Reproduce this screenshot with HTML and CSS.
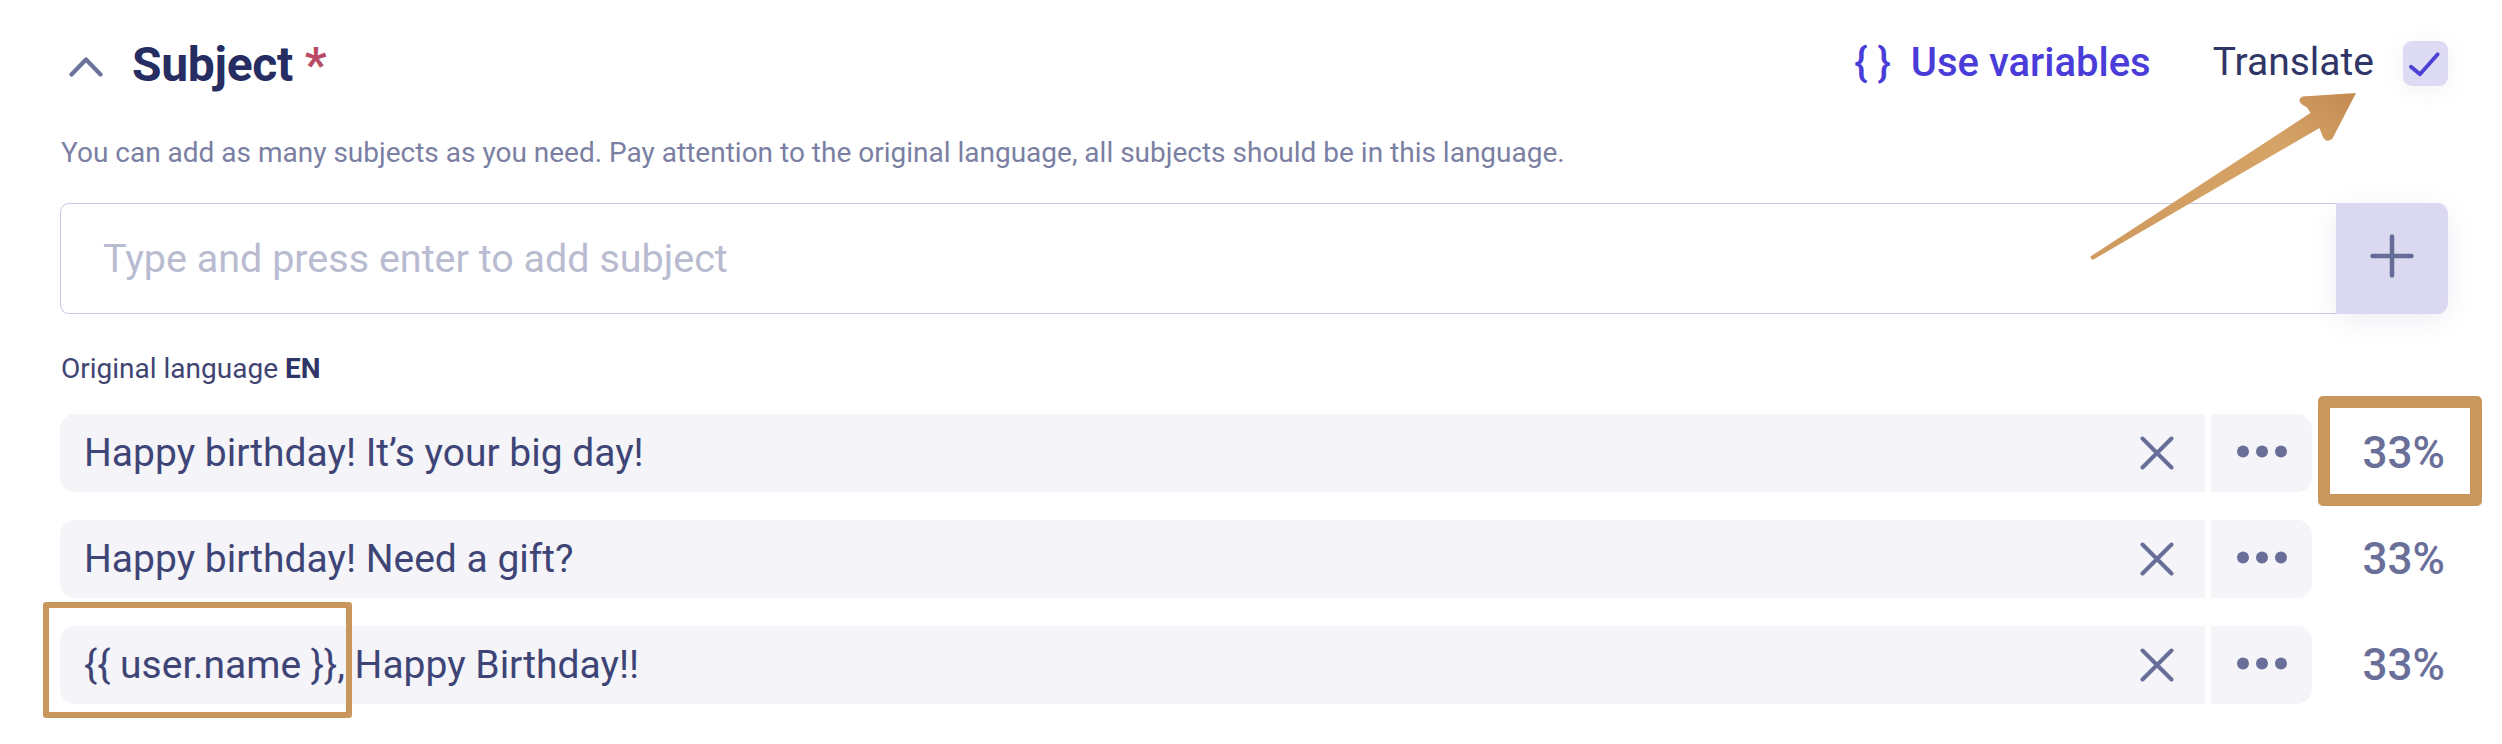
FILE: index.html
```html
<!DOCTYPE html>
<html lang="en">
<head>
<meta charset="utf-8">
<title>Subject</title>
<link rel="stylesheet" href="styles.css">
</head>
<body>
<div class="page">
  <header class="head">
    <div class="title-wrap">
      <svg class="chevron" width="34" height="21" viewBox="0 0 34 21"><polyline points="2.5,18.5 17,3.5 31.5,18.5" fill="none" stroke="#6c7299" stroke-width="4.2" stroke-linecap="round" stroke-linejoin="round"/></svg>
      <h2 class="title">Subject <span class="req">*</span></h2>
    </div>
    <div class="actions">
      <span class="vars"><span class="braces">{ }</span>Use variables</span>
      <span class="translate">Translate</span>
      <span class="check"><svg width="44" height="44" viewBox="0 0 44 44"><polyline points="7,25.7 16,33.3 33.7,13.3" fill="none" stroke="#4b3fd6" stroke-width="3.8" stroke-linecap="round" stroke-linejoin="round"/></svg></span>
    </div>
  </header>
  <p class="hint">You can add as many subjects as you need. Pay attention to the original language, all subjects should be in this language.</p>
  <div class="adder">
    <div class="input">Type and press enter to add subject</div>
    <div class="plus"><svg width="46" height="46" viewBox="0 0 46 46"><path d="M23 3.5 V42.5 M3.5 23 H42.5" fill="none" stroke="#676c96" stroke-width="4.5" stroke-linecap="round"/></svg></div>
  </div>
  <div class="lang">Original language <b>EN</b></div>
  <ul class="list">
    <li class="row">
      <div class="field"><span class="text">Happy birthday! It’s your big day!</span><svg class="x" width="34" height="34" viewBox="0 0 34 34"><path d="M2.5 2.5 L31.5 31.5 M31.5 2.5 L2.5 31.5" stroke="#696e98" stroke-width="4" stroke-linecap="round"/></svg></div>
      <div class="more"><svg width="50" height="13" viewBox="0 0 50 13"><circle cx="6" cy="6.5" r="6" fill="#696e98"/><circle cx="25" cy="6.5" r="6" fill="#696e98"/><circle cx="44" cy="6.5" r="6" fill="#696e98"/></svg></div>
      <div class="pct">33%<span class="mark mark-pct"></span></div>
    </li>
    <li class="row">
      <div class="field"><span class="text">Happy birthday! Need a gift?</span><svg class="x" width="34" height="34" viewBox="0 0 34 34"><path d="M2.5 2.5 L31.5 31.5 M31.5 2.5 L2.5 31.5" stroke="#696e98" stroke-width="4" stroke-linecap="round"/></svg></div>
      <div class="more"><svg width="50" height="13" viewBox="0 0 50 13"><circle cx="6" cy="6.5" r="6" fill="#696e98"/><circle cx="25" cy="6.5" r="6" fill="#696e98"/><circle cx="44" cy="6.5" r="6" fill="#696e98"/></svg></div>
      <div class="pct">33%</div>
    </li>
    <li class="row">
      <div class="field"><span class="text">{{ user.name }}, Happy Birthday!!</span><svg class="x" width="34" height="34" viewBox="0 0 34 34"><path d="M2.5 2.5 L31.5 31.5 M31.5 2.5 L2.5 31.5" stroke="#696e98" stroke-width="4" stroke-linecap="round"/></svg><span class="mark mark-var"></span></div>
      <div class="more"><svg width="50" height="13" viewBox="0 0 50 13"><circle cx="6" cy="6.5" r="6" fill="#696e98"/><circle cx="25" cy="6.5" r="6" fill="#696e98"/><circle cx="44" cy="6.5" r="6" fill="#696e98"/></svg></div>
      <div class="pct">33%</div>
    </li>
  </ul>
  <svg class="arrow" width="290" height="185" viewBox="0 0 290 185">
    <defs>
      <linearGradient id="ag" x1="0" y1="1" x2="1" y2="0">
        <stop offset="0" stop-color="#d09a5e"/>
        <stop offset="0.7" stop-color="#d6a367"/>
        <stop offset="1" stop-color="#c38b52"/>
      </linearGradient>
    </defs>
    <path d="M10.5 171.5 Q10.5 175 13.5 174.5 L239.5 43 L242.5 51 Q246 59 252.5 53.5 L276 8 L222.5 11.5 Q214.5 16 227 22.5 L230.5 28 Z" fill="url(#ag)"/>
  </svg>
</div>
</body>
</html>
```
FILE: styles.css
```css
* { box-sizing: border-box; }
html, body { margin: 0; padding: 0; background: #ffffff; overflow: hidden; }
body { font-family: Roboto, "Noto Sans", "Liberation Sans", sans-serif; color: #3e4576; }

.page {
  position: relative;
  width: 2502px;
  height: 744px;
  padding: 0 54px 0 60px;
}

.head {
  height: 130px;
  display: flex;
  align-items: center;
  justify-content: space-between;
}
.title-wrap { display: flex; align-items: center; gap: 29px; padding-left: 9px; }
.chevron { display: block; margin-top: 4px; }
.title {
  margin: 0;
  font-size: 48px;
  font-weight: 700;
  color: #262d63;
  line-height: 1.1;
  letter-spacing: -0.3px;
}
.req { color: #b84a63; }

.actions { display: flex; align-items: center; }
.vars {
  display: flex;
  align-items: center;
  gap: 20px;
  font-size: 40px;
  font-weight: 500;
  color: #4a3cd9;
  line-height: 1.1;
  margin-top: -5px;
}
.braces { font-weight: 500; }
.translate {
  margin-left: 62px;
  font-size: 39px;
  font-weight: 400;
  color: #2f3566;
  line-height: 1.1;
  margin-top: -5px;
}
.check {
  margin-left: 29px;
  width: 45px;
  height: 45px;
  border-radius: 9px;
  background: #dddaf3;
  box-shadow: 0 4px 22px rgba(90, 90, 150, 0.08);
  display: flex;
  align-items: center;
  justify-content: center;
  margin-top: -4px;
}
.check svg { display: block; }

.hint {
  margin: 3px 0 0 1px;
  font-size: 28px;
  line-height: 40px;
  color: #7a7fa3;
}

.adder {
  margin-top: 30px;
  display: flex;
  height: 111px;
}
.input {
  flex: 1;
  border: 1.5px solid #c8cadf;
  border-right: none;
  border-radius: 9px 0 0 9px;
  padding-left: 42px;
  display: flex;
  align-items: center;
  font-size: 39.5px;
  color: #b9bbd0;
}
.plus {
  width: 112px;
  background: #dbd8f1;
  border-radius: 0 11px 11px 0;
  box-shadow: 0 6px 26px rgba(90, 90, 150, 0.10);
  display: flex;
  align-items: center;
  justify-content: center;
}
.plus svg { display: block; margin-top: -5px; }

.lang {
  margin: 36px 0 0 1px;
  font-size: 28px;
  line-height: 38px;
  color: #3f4473;
}
.lang b { font-weight: 700; color: #2f3566; }

.list {
  list-style: none;
  margin: 26px 0 0 0;
  padding: 0;
  display: flex;
  flex-direction: column;
  gap: 28px;
}
.row {
  display: flex;
  height: 78px;
}
.field {
  position: relative;
  flex: 1;
  background: #f4f4f9;
  border-radius: 15px 0 0 15px;
  display: flex;
  align-items: center;
  justify-content: space-between;
  padding: 0 31px 0 24px;
}
.text {
  font-size: 39px;
  color: #3e4576;
}
.x { display: block; }
.more {
  width: 101px;
  margin-left: 6px;
  background: #f4f4f9;
  border-radius: 0 15px 15px 0;
  display: flex;
  align-items: center;
  justify-content: center;
}
.more svg { display: block; margin-top: -3px; }
.pct {
  position: relative;
  width: 136px;
  display: flex;
  align-items: center;
  justify-content: flex-end;
  padding-right: 3px;
  font-size: 44px;
  font-weight: 500;
  color: #6a6f9a;
}

.mark {
  position: absolute;
  border-style: solid;
  border-color: #c9975d;
  pointer-events: none;
}
.mark-pct {
  left: 6px;
  top: -18px;
  width: 164px;
  height: 110px;
  border-width: 12px;
  border-radius: 5px;
}
.mark-var {
  left: -17px;
  top: -24px;
  width: 309px;
  height: 116px;
  border-width: 6px;
  border-radius: 3px;
}

.arrow {
  position: absolute;
  left: 2080px;
  top: 85px;
  display: block;
}
```
